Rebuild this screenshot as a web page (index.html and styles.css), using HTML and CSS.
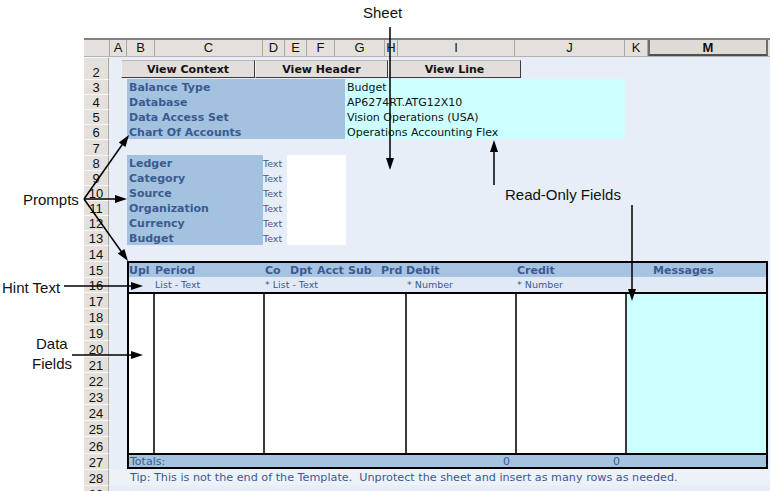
FILE: index.html
```html
<!DOCTYPE html>
<html lang="en">
<head>
    <meta charset="UTF-8">
    <meta name="viewport" content="width=device-width, initial-scale=1.0">
    <title>Budget Journal Template</title>
    <link rel="stylesheet" href="styles.css">
</head>
<body>
    <div class="page">
        <div class="sheet">
            <!-- Column letters -->
            <div class="col-heads">
                <div class="col-head corner"></div>
                <div class="col-head" style="width:17px">A</div>
                <div class="col-head" style="width:28px">B</div>
                <div class="col-head" style="width:108px">C</div>
                <div class="col-head" style="width:22px">D</div>
                <div class="col-head" style="width:22px">E</div>
                <div class="col-head" style="width:28px">F</div>
                <div class="col-head" style="width:50px">G</div>
                <div class="col-head" style="width:13px">H</div>
                <div class="col-head" style="width:117px">I</div>
                <div class="col-head" style="width:110px">J</div>
                <div class="col-head" style="width:23px">K</div>
                <div class="col-head col-selected" style="width:120px">M</div>
            </div>

            <div class="sheet-body">
                <!-- Row numbers -->
                <div class="row-heads">
                    <div class="row-head h22">2</div>
                    <div class="row-head h15">3</div>
                    <div class="row-head h15">4</div>
                    <div class="row-head h15">5</div>
                    <div class="row-head h15">6</div>
                    <div class="row-head h16">7</div>
                    <div class="row-head h15">8</div>
                    <div class="row-head h15">9</div>
                    <div class="row-head h15">10</div>
                    <div class="row-head h15">11</div>
                    <div class="row-head h15">12</div>
                    <div class="row-head h15">13</div>
                    <div class="row-head h16">14</div>
                    <div class="row-head h16">15</div>
                    <div class="row-head h15">16</div>
                    <div class="row-head h16">17</div>
                    <div class="row-head h16">18</div>
                    <div class="row-head h16">19</div>
                    <div class="row-head h16">20</div>
                    <div class="row-head h16">21</div>
                    <div class="row-head h16">22</div>
                    <div class="row-head h16">23</div>
                    <div class="row-head h16">24</div>
                    <div class="row-head h16">25</div>
                    <div class="row-head h17">26</div>
                    <div class="row-head h16">27</div>
                    <div class="row-head h16">28</div>
                    <div class="row-head h16">29</div>
                </div>

                <div class="cells">
                    <div class="button-row">
                        <button class="sheet-btn">View Context</button>
                        <button class="sheet-btn">View Header</button>
                        <button class="sheet-btn">View Line</button>
                    </div>

                    <div class="context-block">
                        <div class="context-labels">
                            <div>Balance Type</div>
                            <div>Database</div>
                            <div>Data Access Set</div>
                            <div>Chart Of Accounts</div>
                        </div>
                        <div class="context-values">
                            <div>Budget</div>
                            <div>AP6274RT.ATG12X10</div>
                            <div>Vision Operations (USA)</div>
                            <div>Operations Accounting Flex</div>
                        </div>
                    </div>

                    <div class="spacer h16"></div>

                    <div class="prompt-block">
                        <div class="prompt-labels">
                            <div>Ledger</div>
                            <div>Category</div>
                            <div>Source</div>
                            <div>Organization</div>
                            <div>Currency</div>
                            <div>Budget</div>
                        </div>
                        <div class="prompt-types">
                            <div>Text</div>
                            <div>Text</div>
                            <div>Text</div>
                            <div>Text</div>
                            <div>Text</div>
                            <div>Text</div>
                        </div>
                        <div class="prompt-inputs"></div>
                    </div>

                    <div class="spacer h16"></div>

                    <div class="lines">
                        <div class="lines-head">
                            <span style="width:24px;padding-left:0">Upl</span>
                            <span style="width:110px">Period</span>
                            <span style="width:25px">Co</span>
                            <span style="width:27px">Dpt</span>
                            <span style="width:31px">Acct</span>
                            <span style="width:33px">Sub</span>
                            <span style="width:26px">Prd</span>
                            <span style="width:110px;padding-left:1px">Debit</span>
                            <span style="width:110px">Credit</span>
                            <span class="messages-head">Messages</span>
                        </div>
                        <div class="lines-hint">
                            <span style="width:24px"></span>
                            <span style="width:110px">List - Text</span>
                            <span style="width:142px">* List - Text</span>
                            <span style="width:110px">* Number</span>
                            <span style="width:110px">* Number</span>
                        </div>
                        <div class="lines-data">
                            <div class="data-col" style="width:24px"></div>
                            <div class="data-col" style="width:110px"></div>
                            <div class="data-col" style="width:142px"></div>
                            <div class="data-col" style="width:110px"></div>
                            <div class="data-col" style="width:110px"></div>
                            <div class="data-col read-only"></div>
                        </div>
                        <div class="lines-totals">
                            <span class="totals-label">Totals:</span>
                            <span class="total-num">0</span>
                            <span class="total-num">0</span>
                        </div>
                    </div>

                    <div class="tip">Tip: This is not the end of the Template.  Unprotect the sheet and insert as many rows as needed.</div>
                </div>
            </div>
        </div>

        <!-- Callouts drawn over the sheet -->
        <svg class="callouts" width="773" height="491" viewBox="0 0 773 491">
            <g class="callout-lines">
                <line x1="390" y1="27" x2="390" y2="160"/>
                <line x1="494" y1="185" x2="494" y2="150"/>
                <line x1="632" y1="205" x2="632" y2="291"/>
                <line x1="84" y1="199" x2="123" y2="143.5"/>
                <line x1="84" y1="199" x2="117" y2="199"/>
                <line x1="84" y1="199" x2="122" y2="252.5"/>
                <line x1="64" y1="286" x2="132" y2="286"/>
                <line x1="72" y1="355" x2="132" y2="355"/>
            </g>
            <g class="callout-heads">
                <polygon points="386,158 394,158 390,170"/>
                <polygon points="490,152 498,152 494,140"/>
                <polygon points="628,289 636,289 632,301"/>
                <polygon points="129,135 125.4,147.1 118.8,142.5"/>
                <polygon points="115,195 115,203 127,199"/>
                <polygon points="128,261 117.8,253.5 124.4,248.9"/>
                <polygon points="131,282 131,290 143,286"/>
                <polygon points="131,351 131,359 143,355"/>
            </g>
            <g class="callout-text">
                <text x="363" y="18">Sheet</text>
                <text x="505" y="200">Read-Only Fields</text>
                <text x="23" y="205">Prompts</text>
                <text x="2" y="293">Hint Text</text>
                <text x="36" y="349">Data</text>
                <text x="32" y="369">Fields</text>
            </g>
        </svg>
    </div>
</body>
</html>
```

FILE: styles.css
```css
:root {
    --sheet-bg: #e7eef8;
    --prompt-blue: #a3c2e0;
    --ink-blue: #3c5a8f;
    --read-only: #ccffff;
    --head-gray: #e4e0dc;
}

* {
    margin: 0;
    padding: 0;
    box-sizing: border-box;
}

body {
    background-color: #fff;
    font-family: "DejaVu Sans", Verdana, sans-serif;
    font-size: 11px;
}

.page {
    position: relative;
    width: 773px;
    height: 491px;
    overflow: hidden;
    padding: 38px 0 0 84px;
}

.sheet {
    width: 686px;
    background-color: var(--sheet-bg);
}

/* Column letters */
.col-heads {
    display: flex;
    height: 19px;
    border-top: 2px solid #808080;
    background-color: var(--head-gray);
    border-bottom: 1px solid #b5b2ae;
}

.col-head {
    font-family: "Liberation Sans", Arial, sans-serif;
    font-size: 13px;
    line-height: 16px;
    text-align: center;
    color: #111;
    border-right: 1px solid #a9a6a3;
}

.corner {
    width: 26px;
}

.col-selected {
    font-weight: bold;
    border-left: 2px solid #6e6e6e;
    border-right: 2px solid #6e6e6e;
    border-bottom: 2px solid #505050;
    background-color: #dedad6;
}

/* Row numbers */
.sheet-body {
    display: flex;
}

.row-heads {
    width: 26px;
    display: flex;
    flex-direction: column;
}

.row-head {
    display: flex;
    align-items: flex-end;
    justify-content: center;
    font-family: "Liberation Sans", Arial, sans-serif;
    font-size: 13px;
    line-height: 13px;
    color: #111;
    background-color: var(--head-gray);
    border-top: 1px solid #f6f6f6;
    border-right: 1px solid #a9a6a3;
    width: 25px;
}

.h15 { height: 15px; }
.h16 { height: 16px; }
.h17 { height: 17px; }
.h22 { height: 22px; }

.cells {
    width: 660px;
    display: flex;
    flex-direction: column;
}

/* Buttons */
.button-row {
    height: 22px;
    display: flex;
    padding: 3px 0 0 11px;
}

.sheet-btn {
    width: 133px;
    height: 18px;
    font-family: "DejaVu Sans", Verdana, sans-serif;
    font-weight: bold;
    font-size: 11px;
    color: #111;
    background-color: #e2dedb;
    border: 1px solid;
    border-color: #b9b6b3 #3c3c3c #3c3c3c #f4f4f4;
}

.sheet-btn:first-child {
    width: 134px;
}

/* Context (rows 3-6) */
.context-block {
    display: flex;
    height: 60px;
    margin-left: 17px;
}

.context-labels {
    width: 218px;
    background-color: var(--prompt-blue);
    color: var(--ink-blue);
    font-weight: bold;
    padding-left: 2px;
}

.context-values {
    width: 280px;
    background-color: var(--read-only);
    color: #111;
    padding-left: 2px;
}

.context-labels div,
.context-values div,
.prompt-labels div,
.prompt-types div {
    height: 15px;
    line-height: 17px;
    white-space: nowrap;
}

/* Prompts (rows 8-13) */
.prompt-block {
    display: flex;
    height: 90px;
    margin-left: 17px;
}

.prompt-labels {
    width: 136px;
    background-color: var(--prompt-blue);
    color: var(--ink-blue);
    font-weight: bold;
    padding-left: 2px;
}

.prompt-types {
    width: 24px;
    font-size: 9.5px;
    color: #4b5b7c;
}

.prompt-inputs {
    width: 59px;
    background-color: #fff;
}

/* Line entry table (rows 15-27) */
.lines {
    width: 641px;
    height: 208px;
    margin-left: 17px;
    border: 2px solid #000;
    display: flex;
    flex-direction: column;
}

.lines-head,
.lines-hint,
.lines-totals {
    display: flex;
    white-space: nowrap;
    color: var(--ink-blue);
}

.lines-head {
    height: 14px;
    line-height: 15px;
    background-color: #a6c4e1;
    font-weight: bold;
}

.lines-head span,
.lines-hint span {
    padding-left: 2px;
    flex: none;
}

.messages-head {
    padding-left: 28px !important;
}

.lines-hint {
    height: 17px;
    line-height: 15px;
    font-size: 9.5px;
    background-color: #e1e9f5;
    border-bottom: 2px solid #000;
}

.lines-data {
    display: flex;
    height: 159px;
}

.data-col {
    background-color: #fff;
    flex: none;
}

.data-col + .data-col {
    border-left: 2px solid #3a3a3a;
}

.data-col.read-only {
    flex: 1;
    background-color: var(--read-only);
}

.lines-totals {
    height: 14px;
    line-height: 13px;
    border-top: 2px solid #000;
    background-color: #a4c3df;
}

.totals-label {
    width: 276px;
    padding-left: 1px;
}

.total-num {
    width: 110px;
    text-align: right;
    padding-right: 5px;
}

.tip {
    height: 16px;
    line-height: 17px;
    padding-left: 20px;
    font-size: 11.2px;
    color: var(--ink-blue);
    white-space: pre;
    background-color: #edf2f9;
}

/* Callouts */
.callouts {
    position: absolute;
    top: 0;
    left: 0;
    pointer-events: none;
}

.callout-lines line {
    stroke: #000;
    stroke-width: 1.5;
}

.callout-heads polygon {
    fill: #000;
}

.callout-text text {
    font-family: "Liberation Sans", Arial, sans-serif;
    font-size: 15px;
    fill: #111;
}
```
